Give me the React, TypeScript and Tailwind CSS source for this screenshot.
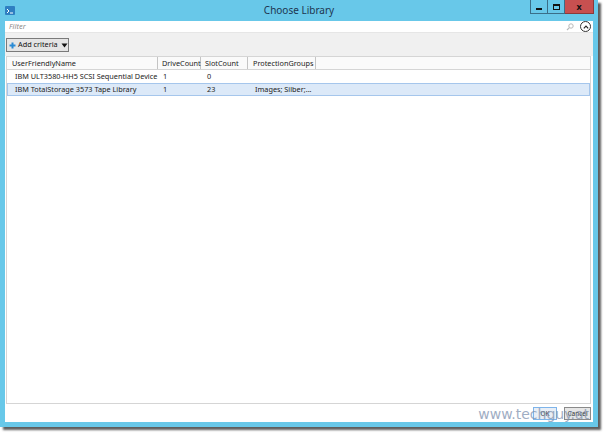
import React from "react";

const font = { fontFamily: '"Noto Sans", "Open Sans", "Liberation Sans", sans-serif' };

const rows = [
  { name: "IBM ULT3580-HH5 SCSI Sequential Device", drive: "1", slot: "0", groups: "" },
  { name: "IBM TotalStorage 3573 Tape Library", drive: "1", slot: "23", groups: "Images; Silber;..." },
];

function App() {
  return (
    <div className="w-[604px] h-[433px] bg-white overflow-hidden" style={font}>
      <div className="w-[598px] h-[427px] bg-[#68c8e9] flex flex-col shadow-[3px_3px_2px_rgba(40,40,40,0.75)]">
        {/* title bar */}
        <div className="h-[21px] grid grid-cols-[1fr_auto_1fr] items-start">
          <div className="pl-[5px] pt-[6px]">
            <div className="w-[10px] h-[9px] bg-[#2f7fc1] rounded-[1px] flex items-center justify-center">
              <svg width="8" height="6" viewBox="0 0 8 6">
                <path d="M1 1 L3 3 L1 5" stroke="white" strokeWidth="1" fill="none" />
                <path d="M4 5 H7" stroke="white" strokeWidth="1" />
              </svg>
            </div>
          </div>
          <div className="pt-[3px] text-[10px] leading-[14px] text-[#1d3550]">Choose Library</div>
          <div className="flex justify-end pr-[4px]">
            <div className="w-[18px] h-[14px] border border-[#3a6e88] border-t-0 bg-[#68c8e9] flex items-end justify-center pb-[3px]">
              <div className="w-[6px] h-[2px] bg-[#111]" />
            </div>
            <div className="w-[17px] h-[14px] border border-l-0 border-t-0 border-[#3a6e88] bg-[#68c8e9] flex items-center justify-center">
              <div className="w-[7px] h-[6px] border border-[#111] border-t-2" />
            </div>
            <div className="w-[29px] h-[14px] bg-[#c75050] border border-l-0 border-t-0 border-[#8c3a3a] flex items-center justify-center text-[9px] font-bold text-[#111] leading-none">
              x
            </div>
          </div>
        </div>

        {/* content */}
        <div className="flex-1 mx-[5px] mb-[5px] bg-white flex flex-col">
          {/* filter */}
          <div className="h-[12px] flex items-center border-b border-[#e6e6e6] pl-[4px] pr-[2px]">
            <span className="flex-1 text-[7.5px] italic text-[#8c8c8c] leading-none">Filter</span>
            <svg width="8" height="8" viewBox="0 0 8 8" className="mr-[6px]">
              <circle cx="5" cy="3" r="2.2" stroke="#b8b8b8" strokeWidth="1" fill="none" />
              <path d="M3.4 4.6 L1 7" stroke="#b8b8b8" strokeWidth="1.2" />
            </svg>
            <div className="w-[11px] h-[11px] rounded-full border border-[#333] flex items-center justify-center">
              <svg width="6" height="4" viewBox="0 0 6 4">
                <path d="M0.8 3.3 L3 1 L5.2 3.3" stroke="#222" strokeWidth="1.2" fill="none" />
              </svg>
            </div>
          </div>

          {/* toolbar */}
          <div className="h-[23px] bg-[#f0f0f0] pl-[1px] pr-[2px] pt-[5px]">
            <div className="w-[63px] h-[14px] bg-[#e4e4e4] border border-[#7a7a7a] flex items-center pl-[2px] gap-[2px] whitespace-nowrap">
              <svg width="7" height="7" viewBox="0 0 7 7">
                <path d="M3.5 0.5 V6.5 M0.5 3.5 H6.5" stroke="#2a8ad4" strokeWidth="2" />
              </svg>
              <span className="text-[7.3px] leading-none text-[#111]">Add criteria</span>
              <svg width="7" height="5" viewBox="0 0 7 5" className="ml-[1px]">
                <path d="M0.5 0.5 H6.5 L3.5 4.5 Z" fill="#111" />
              </svg>
            </div>
          </div>

          {/* table */}
          <div className="flex-1 ml-[1px] mr-[2px] bg-[#f0f0f0]">
            <div className="h-full bg-white border border-[#d5d5d5] flex flex-col">
              <div className="h-[13px] flex border-b border-[#d5d5d5] bg-[#fafafa] text-[7.3px] leading-[12px] text-[#222] whitespace-nowrap">
                <div className="w-[151px] pl-[5px] border-r border-[#c4c4c4]">UserFriendlyName</div>
                <div className="w-[43px] pl-[4px] border-r border-[#c4c4c4]">DriveCount</div>
                <div className="w-[47px] pl-[4px] border-r border-[#c4c4c4]">SlotCount</div>
                <div className="w-[68px] pl-[5px] border-r border-[#c4c4c4]">ProtectionGroups</div>
                <div className="flex-1" />
              </div>
              {rows.map((r, i) => (
                <div
                  key={r.name}
                  className={
                    i === 1
                      ? "h-[13px] flex text-[7.3px] leading-[11px] text-[#222] bg-[#dce9f8] border border-[#a5c6ec]"
                      : "h-[13px] flex text-[7.3px] leading-[11px] text-[#222] border border-transparent"
                  }
                >
                  <div className="w-[150px] pl-[7px] whitespace-nowrap">{r.name}</div>
                  <div className="w-[43px] pl-[5px]">{r.drive}</div>
                  <div className="w-[47px] pl-[6px]">{r.slot}</div>
                  <div className="w-[68px] pl-[7px] whitespace-nowrap">{r.groups}</div>
                </div>
              ))}
            </div>
          </div>

          {/* footer */}
          <div className="h-[18px] relative flex items-start justify-end pr-[2px] pt-[3px] gap-[7px]">
            <div className="w-[24px] h-[13px] border border-[#7eb4ea] bg-[#e8eef6] text-[6.5px] leading-[11px] text-center text-[#333]">
              OK
            </div>
            <div className="w-[27px] h-[13px] border border-[#8a8a8a] bg-[#e6e6e6] text-[6.5px] leading-[11px] text-center text-[#333]">
              Cancel
            </div>
            <div
              className="absolute z-10 pointer-events-none right-[4px] top-[1px] text-[14px] leading-[18px] text-[#7f93b0] opacity-75 whitespace-nowrap"
              style={{ fontFamily: '"DejaVu Sans", sans-serif' }}
            >
              www.techguy.at
            </div>
          </div>
        </div>
      </div>
    </div>
  );
}

export default App;
